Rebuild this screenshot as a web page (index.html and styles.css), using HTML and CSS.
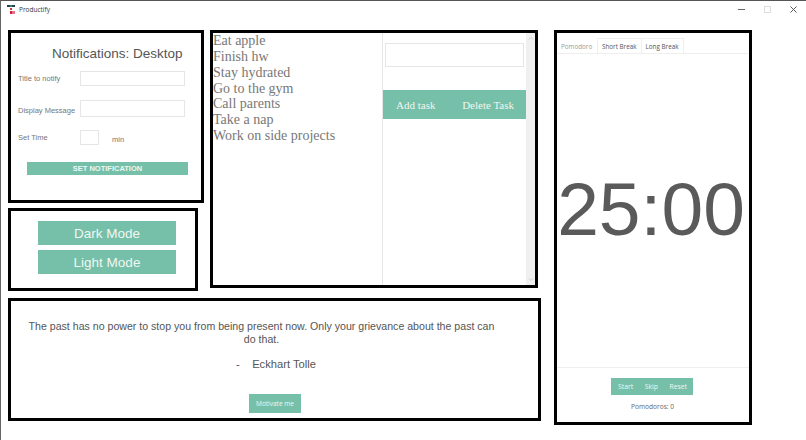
FILE: index.html
```html
<!DOCTYPE html>
<html>

<head>
    <title>Productify</title>
    <link rel="stylesheet" href="styles.css">
</head>

<body>
    <div class="titlebar">
        <svg class="logo" width="9" height="9" viewBox="0 0 9 9">
            <rect x="0" y="0" width="3" height="2" fill="#2b3a55" />
            <rect x="3" y="0" width="2" height="2" fill="#2e8b57" />
            <rect x="5" y="0" width="3" height="2" fill="#2b3a55" />
            <rect x="3" y="3" width="2" height="2" fill="#c0392b" />
            <rect x="3" y="6" width="2" height="3" fill="#d81e3a" />
            <rect x="5" y="6" width="3" height="3" fill="#e2708a" />
        </svg>
        <span class="app-name">Productify</span>
        <div class="window-buttons">
            <svg width="7" height="7" viewBox="0 0 7 7"><path d="M0 3.5H7" stroke="#666" fill="none" /></svg>
            <svg width="7" height="7" viewBox="0 0 7 7"><rect x="0.5" y="0.5" width="6" height="6" stroke="#ddd" fill="none" /></svg>
            <svg width="7" height="7" viewBox="0 0 7 7"><path d="M0.5 0.5L6.5 6.5M6.5 0.5L0.5 6.5" stroke="#555" fill="none" /></svg>
        </div>
    </div>

    <div class="main">
        <div class="left">
            <div class="top">
                <div class="side">
                    <div class="box notify">
                        <h1>Notifications: Desktop</h1>
                        <div class="field">
                            <label>Title to notify</label>
                            <input type="text" class="text-input" />
                        </div>
                        <div class="field field-message">
                            <label>Display Message</label>
                            <input type="text" class="text-input" />
                        </div>
                        <div class="field field-time">
                            <label>Set Time</label>
                            <input type="text" class="min-input" />
                            <span class="min">min</span>
                        </div>
                        <button class="btn btn-notify">SET NOTIFICATION</button>
                    </div>
                    <div class="box modes">
                        <button class="btn btn-mode">Dark Mode</button>
                        <button class="btn btn-mode">Light Mode</button>
                    </div>
                </div>

                <div class="box todo">
                    <div class="tasks">
                        <div>Eat apple</div>
                        <div>Finish hw</div>
                        <div>Stay hydrated</div>
                        <div>Go to the gym</div>
                        <div>Call parents</div>
                        <div>Take a nap</div>
                        <div>Work on side projects</div>
                    </div>
                    <div class="task-form">
                        <input type="text" class="task-input" />
                        <div class="task-buttons">
                            <button class="btn-task">Add task</button>
                            <button class="btn-task">Delete Task</button>
                        </div>
                    </div>
                    <div class="scrollbar">
                        <svg width="8" height="5" viewBox="0 0 8 5"><path d="M2 3.5L4 1.5L6 3.5" stroke="#ccc" fill="none" /></svg>
                        <svg width="8" height="5" viewBox="0 0 8 5"><path d="M2 1.5L4 3.5L6 1.5" stroke="#ccc" fill="none" /></svg>
                    </div>
                </div>
            </div>

            <div class="box quote">
                <p class="quote-text">The past has no power to stop you from being present now. Only your grievance about the past can do that.</p>
                <p class="quote-author">-&nbsp;&nbsp;&nbsp;&nbsp;Eckhart Tolle</p>
                <button class="btn btn-motivate">Motivate me</button>
            </div>
        </div>

        <div class="box pomodoro">
            <div class="tabs">
                <div class="tab active">Pomodoro</div>
                <div class="tab">Short Break</div>
                <div class="tab">Long Break</div>
            </div>
            <div class="timer">25:00</div>
            <div class="controls">
                <div class="control-buttons">
                    <button class="btn-control">Start</button>
                    <button class="btn-control">Skip</button>
                    <button class="btn-control">Reset</button>
                </div>
                <div class="count">Pomodoros: 0</div>
            </div>
        </div>
    </div>
</body>

</html>
```

FILE: styles.css
```css
* {
    box-sizing: border-box;
}

html,
body {
    height: 440px;
    overflow: hidden;
}

body {
    margin: 0;
    background-color: white;
    border-top: 1px solid #555;
    border-left: 1px solid #666;
    font-family: "Liberation Sans", sans-serif;
    color: #555;
}

button {
    border: none;
    padding: 0;
    color: #eef7f3;
}

input {
    border: 1px solid #e6e6e6;
    background-color: white;
    padding: 0;
}

.titlebar {
    display: flex;
    align-items: center;
    height: 17px;
    padding-left: 6px;
    padding-right: 9px;
}

.logo {
    margin-right: 3px;
}

.app-name {
    font-family: "Open Sans", sans-serif;
    font-size: 6.5px;
    color: #333;
}

.window-buttons {
    display: flex;
    gap: 19px;
    margin-left: auto;
}

.main {
    display: flex;
    align-items: flex-start;
    padding-top: 12px;
    padding-left: 7px;
}

.box {
    border: 3px solid black;
    background-color: white;
}

.left {
    display: flex;
    flex-direction: column;
    width: 533px;
    gap: 7px;
}

.top {
    display: flex;
    gap: 6px;
}

.side {
    display: flex;
    flex-direction: column;
    gap: 5px;
    width: 196px;
}

.btn {
    display: block;
    background-color: #76bfa8;
}

/* notifications */
.notify {
    height: 173px;
    padding-left: 7px;
}

h1 {
    margin: 0;
    padding-top: 12px;
    padding-left: 34px;
    font-size: 13.5px;
    font-weight: normal;
    line-height: 17px;
}

.field {
    display: flex;
    align-items: center;
    margin-top: 9px;
    height: 15px;
    font-size: 7.5px;
    color: #777;
}

.field label {
    width: 62px;
}

.text-input {
    width: 105px;
    height: 15px;
}

.field-message {
    margin-top: 15px;
}

.field-message label {
    margin-top: 3px;
}

.field-message .text-input {
    height: 17px;
}

.field-time {
    margin-top: 14px;
}

.min-input {
    width: 19px;
    height: 15px;
}

.min {
    margin-left: 13px;
    margin-top: 3px;
}

.btn-notify {
    width: 161px;
    height: 13px;
    margin-top: 17px;
    margin-left: 9px;
    font-size: 7.5px;
    font-weight: bold;
}

/* dark and light mode */
.modes {
    width: 190px;
    height: 83px;
    padding-top: 10px;
    padding-left: 27px;
}

.btn-mode {
    width: 138px;
    height: 24px;
    margin-bottom: 5px;
    font-family: "Liberation Sans", sans-serif;
    font-size: 13.5px;
}

/* todo list */
.todo {
    display: flex;
    width: 328px;
    height: 258px;
    font-family: "Liberation Serif", serif;
}

.tasks {
    width: 170px;
    border-right: 1px solid #e6e6e6;
    font-size: 14px;
    line-height: 15.85px;
    color: #777;
}

.task-form {
    flex: 1;
}

.task-input {
    display: block;
    width: 139px;
    height: 24px;
    margin-top: 10px;
    margin-left: 2px;
}

.task-buttons {
    display: flex;
    align-items: center;
    justify-content: space-between;
    height: 29px;
    margin-top: 23px;
    padding-left: 13px;
    padding-right: 12px;
    background-color: #76bfa8;
}

.btn-task {
    background: none;
    font-family: "Liberation Serif", serif;
    font-size: 11px;
}

.scrollbar {
    display: flex;
    flex-direction: column;
    justify-content: space-between;
    align-items: center;
    width: 9px;
    padding-top: 3px;
    padding-bottom: 3px;
    background-color: #f0f0f0;
}

/* quote */
.quote {
    height: 123px;
    padding-top: 19px;
    text-align: center;
}

.quote p {
    margin: 0;
    line-height: 13px;
}

.quote-text {
    padding-left: 12px;
    padding-right: 38px;
    font-size: 10.6px;
}

.quote .quote-author {
    margin-top: 12px;
    padding-left: 3px;
    font-size: 11.2px;
}

.btn-motivate {
    width: 52px;
    height: 19px;
    margin-top: 23px;
    margin-left: 238px;
    font-family: "Open Sans", sans-serif;
    font-size: 6.5px;
}

/* pomodoro */
.pomodoro {
    display: flex;
    flex-direction: column;
    width: 198px;
    height: 395px;
    margin-left: 13px;
    font-family: "Open Sans", sans-serif;
}

.tabs {
    display: flex;
    height: 16px;
    margin-top: 5px;
    border-bottom: 1px solid #eee;
    font-size: 6.3px;
}

.tab {
    line-height: 15px;
    height: 16px;
    padding-left: 4px;
    padding-right: 4px;
    border-right: 1px solid #eee;
    border-top: 1px solid #eee;
    color: #555;
}

.tab.active {
    width: 41px;
    border-top-color: white;
    color: #999;
}

.timer {
    flex: 1;
    padding-top: 118px;
    padding-right: 4px;
    text-align: center;
    font-family: "Liberation Sans", sans-serif;
    font-size: 75px;
    line-height: 75px;
    color: #5a5a5a;
}

.controls {
    height: 55px;
    border-top: 1px solid #eee;
    padding-top: 10px;
    text-align: center;
}

.control-buttons {
    display: flex;
    justify-content: space-between;
    width: 82px;
    height: 17px;
    margin-left: 54px;
    padding-left: 7px;
    padding-right: 6px;
    background-color: #76bfa8;
}

.btn-control {
    background: none;
    font-family: "Open Sans", sans-serif;
    font-size: 6.8px;
}

.count {
    margin-top: 7px;
    padding-right: 1px;
    font-size: 6.6px;
    color: #666;
}
```
